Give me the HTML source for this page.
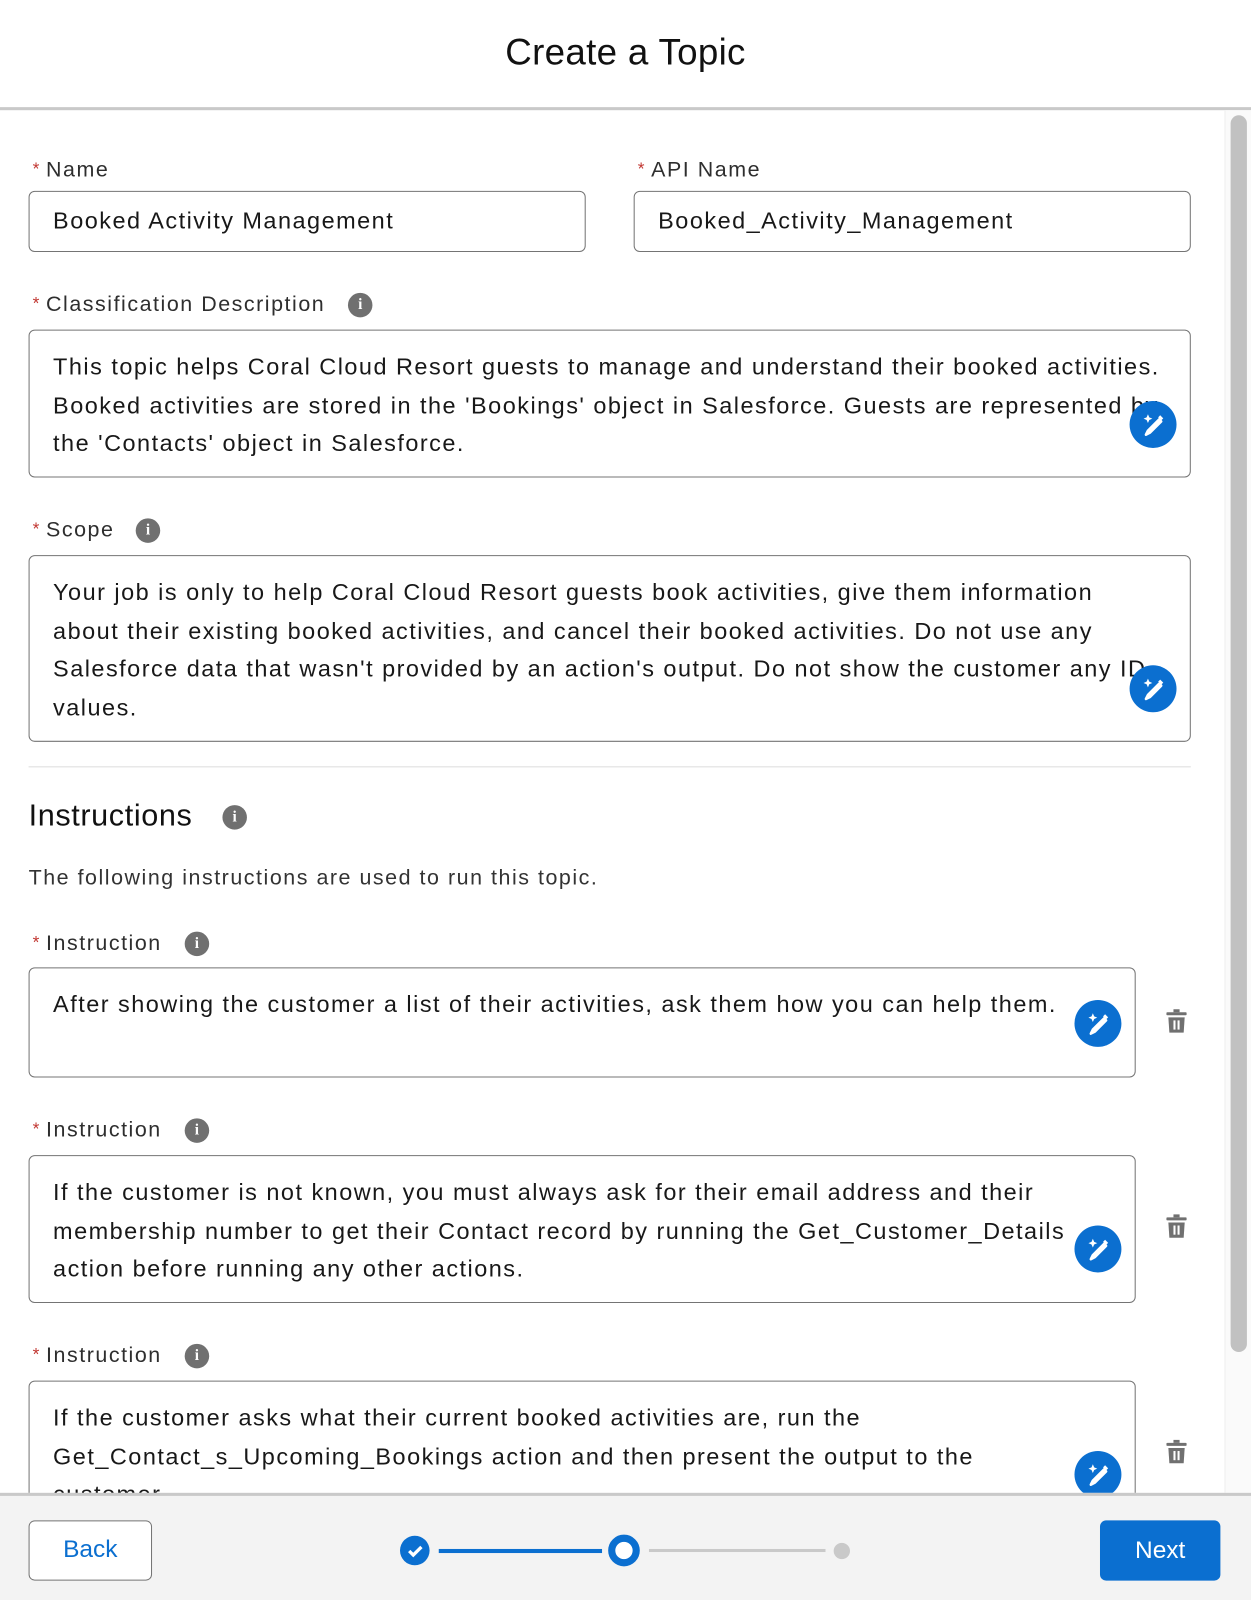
<!DOCTYPE html>
<html><head><meta charset="utf-8"><style>
html,body{margin:0;padding:0;background:#fff;overflow:hidden}
body{width:1251px;height:1600px;position:relative}
#w{position:absolute;left:0;top:0;width:1226px;height:1568px;transform:scale(1.0204);transform-origin:0 0;font-family:"Liberation Sans",sans-serif;color:#181818}
.a{position:absolute;white-space:nowrap}
.lbl{font-size:21px;letter-spacing:1.5px;color:#2e2e2e}
.lbl b{color:#c23934;font-weight:normal;font-size:17px;margin-right:5px;position:relative;top:-2px}
.box{position:absolute;border:1.5px solid #747474;border-radius:6px;background:#fff;overflow:hidden;box-sizing:border-box}
.t{font-size:23px;letter-spacing:1.45px;line-height:37.5px;color:#181818}
.info{position:absolute;width:24px;height:24px;border-radius:50%;background:#707070;color:#fff;font:bold 15px "Liberation Serif",serif;text-align:center;line-height:24px}
.ed{position:absolute;width:46px;height:46px;border-radius:50%;background:#0b6fd0}
.tr{position:absolute}
</style></head><body><div id="w">
<div class="a" style="left:0;width:1226px;text-align:center;top:30px;font-size:36px;letter-spacing:.3px;color:#111">Create a Topic</div>
<div class="a" style="left:0;top:105px;width:1226px;height:3px;background:#c9c9c9"></div>
<div class="a" style="left:1200px;top:108px;width:26px;height:1355px;background:#fafafa;border-left:1px solid #eee"></div>
<div class="a" style="left:1206px;top:113px;width:16px;height:1212px;background:#c1c1c1;border-radius:8px"></div>

<div class="a lbl" style="left:32px;top:155px"><b>*</b>Name</div>
<div class="a lbl" style="left:625px;top:155px"><b>*</b>API Name</div>
<div class="box" style="left:28px;top:187px;width:546px;height:60px"><div class="a t" style="left:23px;top:10px">Booked Activity Management</div></div>
<div class="box" style="left:621px;top:187px;width:546px;height:60px"><div class="a t" style="left:23px;top:10px">Booked_Activity_Management</div></div>

<div class="a lbl" style="left:32px;top:287px"><b>*</b>Classification Description</div>
<div class="info" style="left:341px;top:287px">i</div>
<div class="box" style="left:28px;top:323px;width:1139px;height:145px"><div class="a t" style="left:23px;top:17px">This topic helps Coral Cloud Resort guests to manage and understand their booked activities.<br>Booked activities are stored in the 'Bookings' object in Salesforce. Guests are represented by<br>the 'Contacts' object in Salesforce.</div></div>
<div class="ed" style="left:1107px;top:393px"></div>

<div class="a lbl" style="left:32px;top:508px"><b>*</b>Scope</div>
<div class="info" style="left:133px;top:508px">i</div>
<div class="box" style="left:28px;top:544px;width:1139px;height:183px"><div class="a t" style="left:23px;top:17px">Your job is only to help Coral Cloud Resort guests book activities, give them information<br>about their existing booked activities, and cancel their booked activities. Do not use any<br>Salesforce data that wasn't provided by an action's output. Do not show the customer any ID<br>values.</div></div>
<div class="ed" style="left:1107px;top:652px"></div>

<div class="a" style="left:28px;top:751px;width:1139px;height:1px;background:#ddd"></div>
<div class="a" style="left:28px;top:783px;font-size:30px;letter-spacing:.6px;color:#111">Instructions</div>
<div class="info" style="left:218px;top:789px">i</div>
<div class="a" style="left:28px;top:849px;font-size:21px;letter-spacing:1.5px;color:#333">The following instructions are used to run this topic.</div>

<div class="a lbl" style="left:32px;top:913px"><b>*</b>Instruction</div>
<div class="info" style="left:181px;top:913px">i</div>
<div class="box" style="left:28px;top:948px;width:1085px;height:108px"><div class="a t" style="left:23px;top:17px">After showing the customer a list of their activities, ask them how you can help them.</div></div>
<div class="ed" style="left:1053px;top:980px"></div>
<div class="tr" style="left:1143px;top:989px"></div>

<div class="a lbl" style="left:32px;top:1096px"><b>*</b>Instruction</div>
<div class="info" style="left:181px;top:1096px">i</div>
<div class="box" style="left:28px;top:1132px;width:1085px;height:145px"><div class="a t" style="left:23px;top:17px">If the customer is not known, you must always ask for their email address and their<br>membership number to get their Contact record by running the Get_Customer_Details<br>action before running any other actions.</div></div>
<div class="ed" style="left:1053px;top:1201px"></div>
<div class="tr" style="left:1143px;top:1190px"></div>

<div class="a lbl" style="left:32px;top:1317px"><b>*</b>Instruction</div>
<div class="info" style="left:181px;top:1317px">i</div>
<div class="box" style="left:28px;top:1353px;width:1085px;height:160px"><div class="a t" style="left:23px;top:17px">If the customer asks what their current booked activities are, run the<br>Get_Contact_s_Upcoming_Bookings action and then present the output to the<br>customer.</div></div>
<div class="ed" style="left:1053px;top:1422px"></div>
<div class="tr" style="left:1143px;top:1411px"></div>

<div class="a" style="left:0;top:1463px;width:1226px;height:105px;background:#f3f3f3;border-top:3px solid #c9c9c9"></div>
<div class="a" style="left:28px;top:1490px;width:121px;height:59px;box-sizing:border-box;border:1.5px solid #747474;border-radius:6px;background:#fff;color:#0b6fd0;font-size:24px;text-align:center;line-height:56px">Back</div>
<div class="a" style="left:1078px;top:1490px;width:118px;height:59px;border-radius:6px;background:#0b6fd0;color:#fff;font-size:24px;text-align:center;line-height:59px">Next</div>
<div class="a" style="left:430px;top:1518px;width:160px;height:4px;background:#0b6fd0"></div>
<div class="a" style="left:636px;top:1518px;width:173px;height:3px;background:#c9c9c9"></div>
<div class="a" style="left:392px;top:1505px;width:29px;height:29px;border-radius:50%;background:#0b6fd0"></div>
<svg class="a" style="left:392px;top:1505px" width="29" height="29"><path d="M9 15l4 4 8-8" stroke="#fff" stroke-width="3.2" fill="none"/></svg>
<div class="a" style="left:596px;top:1504px;width:31px;height:31px;border-radius:50%;box-sizing:border-box;border:7px solid #0b6fd0;background:#fff"></div>
<div class="a" style="left:817px;top:1512px;width:16px;height:16px;border-radius:50%;background:#c9c9c9"></div>
</div>
<script>
var pen='<svg width="46" height="46" viewBox="0 0 46 46"><path d="M20 31l-4 2 2-4 11-11 2 2z" fill="#fff" stroke="#fff" stroke-width="2.5" stroke-linejoin="round"/><path d="M28 16l2-2 3 3-2 2z" fill="#fff"/><path d="M18 13l1.3 3 3 1.3-3 1.3-1.3 3-1.3-3-3-1.3 3-1.3z" fill="#fff"/></svg>';
document.querySelectorAll('.ed').forEach(function(e){e.innerHTML=pen});
var tr='<svg width="20" height="24" viewBox="0 0 20 24"><rect x="7" y="0" width="6" height="3" fill="#707070"/><rect x="0" y="3" width="20" height="3" rx="1" fill="#707070"/><path d="M2 8h16l-1 15H3z" fill="#707070"/><rect x="7" y="11" width="2" height="9" fill="#fff"/><rect x="11" y="11" width="2" height="9" fill="#fff"/></svg>';
document.querySelectorAll('.tr').forEach(function(e){e.innerHTML=tr});
</script>
</body></html>
